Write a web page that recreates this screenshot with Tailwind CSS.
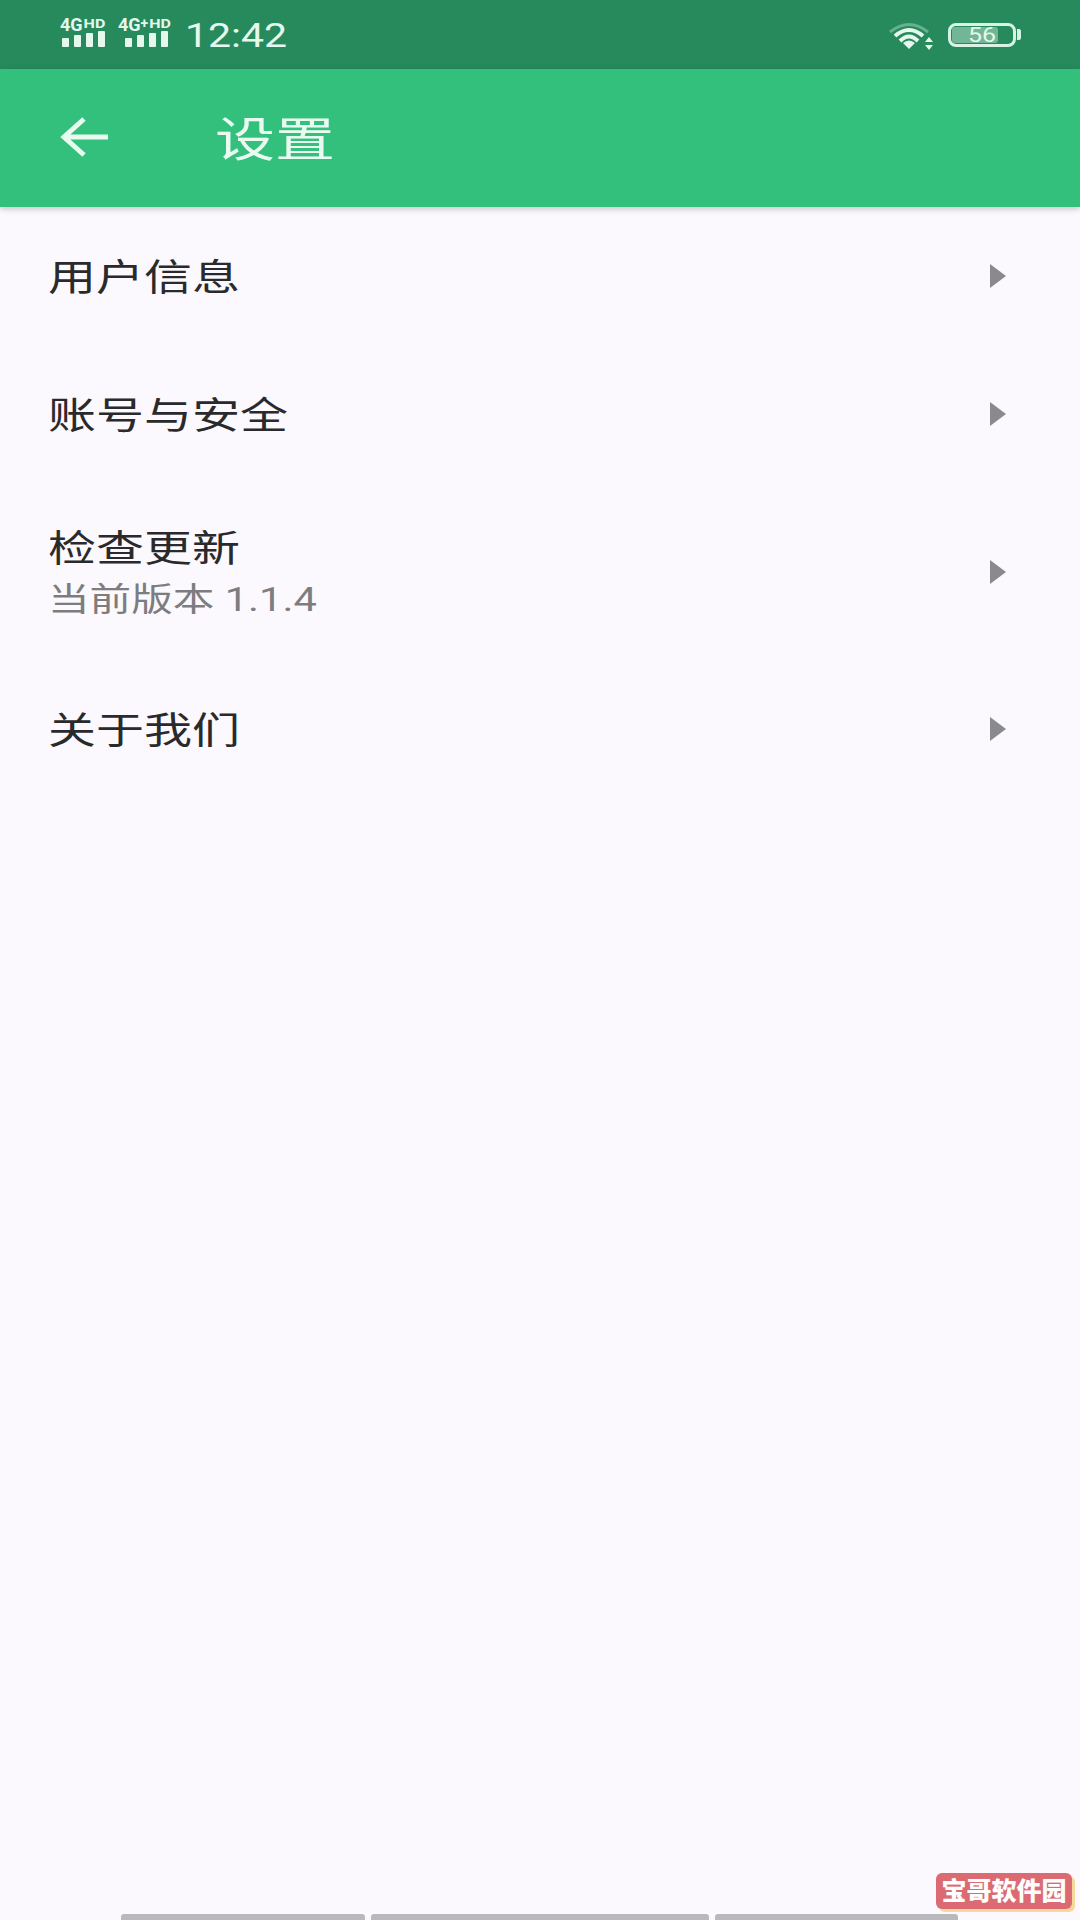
<!DOCTYPE html>
<html lang="zh-CN">
<head>
  <meta charset="UTF-8" />
  <meta name="viewport" content="width=device-width, initial-scale=1.0" />
  <title>设置</title>
  <script src="https://cdn.jsdelivr.net/npm/@tailwindcss/browser@4"></script>
</head>
<body class="bg-[#fbf9fd] font-['Roboto','Noto_Sans_CJK_SC',sans-serif]">
  <div class="relative w-[1080px] h-[1920px] overflow-hidden flex flex-col">

    <!-- Status bar -->
    <div class="h-[69px] bg-[#268a5c] flex items-center pl-[60px] pr-[59px] text-[#e6f8ee]">
      <div class="w-[48px] mb-[4px] flex flex-col whitespace-nowrap">
        <div class="h-[13px] flex items-start font-bold">
          <span class="text-[18px] leading-[14px]">4G</span><span class="text-[16px] leading-[11px] ml-[1px] scale-y-[0.85]">HD</span>
        </div>
        <div class="flex items-end gap-[5px] h-[16px] pl-[2px]">
          <div class="w-[7px] h-[9px] bg-[#e6f8ee] rounded-[1px]"></div>
          <div class="w-[7px] h-[12px] bg-[#e6f8ee] rounded-[1px]"></div>
          <div class="w-[7px] h-[14px] bg-[#e6f8ee] rounded-[1px]"></div>
          <div class="w-[7px] h-[16px] bg-[#e6f8ee] rounded-[1px]"></div>
        </div>
      </div>
      <div class="w-[58px] ml-[10px] mb-[4px] flex flex-col whitespace-nowrap">
        <div class="h-[13px] flex items-start font-bold">
          <span class="text-[18px] leading-[14px]">4G</span><span class="text-[14px] leading-[11px]">+</span><span class="text-[16px] leading-[11px] ml-[1px] scale-y-[0.85]">HD</span>
        </div>
        <div class="flex items-end gap-[5px] h-[16px] pl-[7px]">
          <div class="w-[7px] h-[9px] bg-[#e6f8ee] rounded-[1px]"></div>
          <div class="w-[7px] h-[12px] bg-[#e6f8ee] rounded-[1px]"></div>
          <div class="w-[7px] h-[14px] bg-[#e6f8ee] rounded-[1px]"></div>
          <div class="w-[7px] h-[16px] bg-[#e6f8ee] rounded-[1px]"></div>
        </div>
      </div>
      <div class="ml-[9px] mt-[3px] text-[41px] leading-none scale-y-[0.8]">12:42</div>

      <div class="ml-auto flex items-center">
        <svg width="48" height="30" viewBox="0 0 48 30" fill="none" class="mt-[2px]">
          <path d="M2 11 Q21 -4 40 11" stroke="#e6f8ee" stroke-opacity="0.35" stroke-width="3"/>
          <path d="M7 15 Q21 3 35 15" stroke="#e6f8ee" stroke-width="4"/>
          <path d="M12 20 Q21 11 30 20" stroke="#e6f8ee" stroke-width="4"/>
          <path d="M15 22 Q21 17 27 22 L21 28 Z" fill="#e6f8ee"/>
          <path d="M41 16 L45 21 H37 Z M41 29 L37 24 H45 Z" fill="#e6f8ee"/>
        </svg>
        <div class="ml-[12px] w-[68px] h-[24px] border-[3px] border-[#d8f3e4] rounded-[8px] p-[1px] relative flex items-center">
          <div class="w-[46px] h-full bg-[#e6f8ee]/40 rounded-[3px]"></div>
          <span class="absolute left-[17px] top-[-2px] text-[25px] leading-[24px] text-[#e6f8ee] scale-y-[0.8]">56</span>
        </div>
        <div class="ml-[1px] w-[4px] h-[11px] bg-[#d8f3e4] rounded-r-[2px]"></div>
      </div>
    </div>

    <!-- App bar -->
    <div class="relative z-10 h-[138px] bg-[#32c07c] flex items-center shadow-[0_2px_6px_rgba(0,0,0,0.22)] text-[#e9faf1]">
      <svg width="50" height="40" viewBox="0 0 50 40" fill="none" class="ml-[60px] mt-[-2px]">
        <path d="M48 20 H4 M24 2 L4 20 L24 38" stroke="#e9faf1" stroke-width="5"/>
      </svg>
      <div class="ml-[108px] text-[60px] leading-none scale-y-[0.78] -translate-x-[3px] translate-y-[2px]">设置</div>
    </div>

    <!-- Settings list -->
    <div class="flex flex-col">
      <div class="h-[138px] flex items-center pl-[48px] pr-[74px]">
        <div class="text-[48px] leading-none text-[#2a2a2c] scale-y-[0.78] translate-y-[3px]">用户信息</div>
        <div class="ml-auto w-0 h-0 border-y-[12px] border-y-transparent border-l-[16px] border-l-[#8a8a8e]"></div>
      </div>
      <div class="h-[138px] flex items-center pl-[48px] pr-[74px]">
        <div class="text-[48px] leading-none text-[#2a2a2c] scale-y-[0.78] translate-y-[3px]">账号与安全</div>
        <div class="ml-auto w-0 h-0 border-y-[12px] border-y-transparent border-l-[16px] border-l-[#8a8a8e]"></div>
      </div>
      <div class="h-[177px] flex items-center pl-[48px] pr-[74px]">
        <div class="flex flex-col">
          <div class="text-[48px] leading-[52px] text-[#2a2a2c] scale-y-[0.78] origin-left translate-y-[4px]">检查更新</div>
          <div class="text-[41.6px] leading-[52px] text-[#7d7d80] scale-y-[0.78] origin-left translate-y-[2px]">当前版本 1.1.4</div>
        </div>
        <div class="ml-auto w-0 h-0 border-y-[12px] border-y-transparent border-l-[16px] border-l-[#8a8a8e]"></div>
      </div>
      <div class="h-[138px] flex items-center pl-[48px] pr-[74px]">
        <div class="text-[48px] leading-none text-[#2a2a2c] scale-y-[0.78] translate-y-[3px]">关于我们</div>
        <div class="ml-auto w-0 h-0 border-y-[12px] border-y-transparent border-l-[16px] border-l-[#8a8a8e]"></div>
      </div>
    </div>

    <!-- Bottom bars -->
    <div class="mt-auto h-[6px] pl-[121px] flex gap-[6px]">
      <div class="w-[244px] bg-[#b9b8bc] rounded-t-[3px]"></div>
      <div class="w-[338px] bg-[#b9b8bc] rounded-t-[3px]"></div>
      <div class="w-[243px] bg-[#b9b8bc] rounded-t-[3px]"></div>
    </div>

    <!-- Watermark -->
    <div class="absolute left-[936px] top-[1873px] w-[136px] h-[36px] bg-[#dc6a72] rounded-[6px] shadow-[3px_3px_0_#f7d79c] flex items-center justify-center text-white text-[25px] font-black leading-none whitespace-nowrap">宝哥软件园</div>
  </div>
</body>
</html>
